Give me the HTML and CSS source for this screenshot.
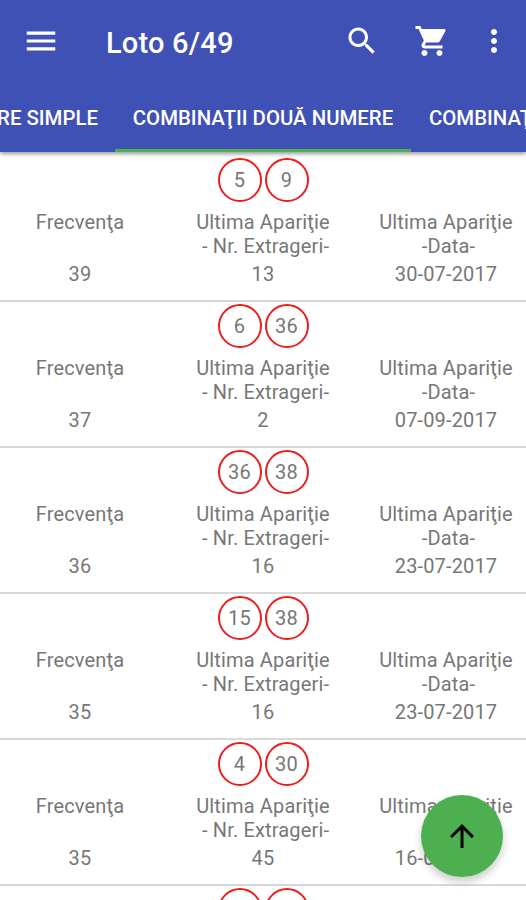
FILE: index.html
```
<!DOCTYPE html>
<html lang="ro">
<head>
  <meta charset="UTF-8">
  <meta name="viewport" content="width=device-width, initial-scale=1.0">
  <title>Loto 6/49</title>
  <link rel="stylesheet" href="styles.css">
</head>
<body>
  <!-- App bar -->
  <header class="app-bar">
    <div class="toolbar">
      <svg class="icon menu" viewBox="0 0 24 24"><path d="M3 18h18v-2H3v2zm0-5h18v-2H3v2zm0-7v2h18V6H3z"/></svg>
      <h1>Loto 6/49</h1>
      <svg class="icon search" viewBox="0 0 24 24"><path d="M15.5 14h-.79l-.28-.27C15.41 12.59 16 11.11 16 9.5 16 5.91 13.09 3 9.5 3S3 5.91 3 9.5 5.91 16 9.5 16c1.61 0 3.09-.59 4.23-1.57l.27.28v.79l5 4.99L20.49 19l-4.99-5zm-6 0C7.01 14 5 11.99 5 9.5S7.01 5 9.5 5 14 7.01 14 9.5 11.99 14 9.5 14z"/></svg>
      <svg class="icon cart" viewBox="0 0 24 24"><path d="M7 18c-1.1 0-1.99.9-1.99 2S5.9 22 7 22s2-.9 2-2-.9-2-2-2zM1 2v2h2l3.6 7.59-1.35 2.45c-.16.28-.25.61-.25.96 0 1.1.9 2 2 2h12v-2H7.42c-.14 0-.25-.11-.25-.25l.03-.12.9-1.63h7.45c.75 0 1.41-.41 1.75-1.03l3.58-6.49c.08-.14.12-.31.12-.48 0-.55-.45-1-1-1H5.21l-.94-2H1zm16 16c-1.1 0-1.99.9-1.99 2s.89 2 1.99 2 2-.9 2-2-.9-2-2-2z"/><path d="M5.2 4h15.8l-4.6 8H8.6z"/></svg>
      <svg class="icon more" viewBox="0 0 24 24"><path d="M12 8c1.1 0 2-.9 2-2s-.9-2-2-2-2 .9-2 2 .9 2 2 2zm0 2c-1.1 0-2 .9-2 2s.9 2 2 2 2-.9 2-2-.9-2-2-2zm0 6c-1.1 0-2 .9-2 2s.9 2 2 2 2-.9 2-2-.9-2-2-2z"/></svg>
    </div>
    <nav class="tabs">
      <div class="tab tab-prev">RE SIMPLE</div>
      <div class="tab active">COMBINAŢII DOUĂ NUMERE</div>
      <div class="tab tab-next">COMBINAŢ</div>
    </nav>
  </header>

  <!-- Lista de combinatii -->
  <main class="list">
    <section class="row">
      <div class="balls"><span>5</span><span>9</span></div>
      <div class="col"><p>Frecvenţa</p><b>39</b></div>
      <div class="col"><p>Ultima Apariţie<br>&nbsp;- Nr. Extrageri-</p><b>13</b></div>
      <div class="col"><p>Ultima Apariţie<br>&nbsp;-Data-</p><b>30-07-2017</b></div>
    </section>
    <section class="row">
      <div class="balls"><span>6</span><span>36</span></div>
      <div class="col"><p>Frecvenţa</p><b>37</b></div>
      <div class="col"><p>Ultima Apariţie<br>&nbsp;- Nr. Extrageri-</p><b>2</b></div>
      <div class="col"><p>Ultima Apariţie<br>&nbsp;-Data-</p><b>07-09-2017</b></div>
    </section>
    <section class="row">
      <div class="balls"><span>36</span><span>38</span></div>
      <div class="col"><p>Frecvenţa</p><b>36</b></div>
      <div class="col"><p>Ultima Apariţie<br>&nbsp;- Nr. Extrageri-</p><b>16</b></div>
      <div class="col"><p>Ultima Apariţie<br>&nbsp;-Data-</p><b>23-07-2017</b></div>
    </section>
    <section class="row">
      <div class="balls"><span>15</span><span>38</span></div>
      <div class="col"><p>Frecvenţa</p><b>35</b></div>
      <div class="col"><p>Ultima Apariţie<br>&nbsp;- Nr. Extrageri-</p><b>16</b></div>
      <div class="col"><p>Ultima Apariţie<br>&nbsp;-Data-</p><b>23-07-2017</b></div>
    </section>
    <section class="row">
      <div class="balls"><span>4</span><span>30</span></div>
      <div class="col"><p>Frecvenţa</p><b>35</b></div>
      <div class="col"><p>Ultima Apariţie<br>&nbsp;- Nr. Extrageri-</p><b>45</b></div>
      <div class="col"><p>Ultima Apariţie<br>&nbsp;-Data-</p><b>16-04-2017</b></div>
    </section>
    <section class="row">
      <div class="balls"><span></span><span></span></div>
    </section>
  </main>

  <!-- Buton inapoi sus -->
  <div class="fab">
    <svg viewBox="0 0 24 24"><path d="M4 12l1.41 1.41L11 7.83V20h2V7.83l5.58 5.59L20 12l-8-8-8 8z"/></svg>
  </div>
</body>
</html>
```

FILE: styles.css
```
* {
  margin: 0;
  padding: 0;
  box-sizing: border-box;
}

body {
  height: 900px;
  display: flex;
  flex-direction: column;
  overflow: hidden;
  font-family: Roboto, "Noto Sans", sans-serif;
  color: #777;
  background: #fff;
}

/* App bar */
.app-bar {
  height: 152px;
  flex-shrink: 0;
  background: #3f51b5;
  color: #fff;
  box-shadow: 0 2px 4px rgba(0, 0, 0, 0.4);
  z-index: 1;
}

.toolbar {
  height: 82px;
  display: flex;
  align-items: center;
  padding: 0 14px 0 22px;
}

.icon {
  width: 36px;
  height: 36px;
  fill: #fff;
  flex-shrink: 0;
}

.menu {
  width: 38px;
  height: 38px;
}

.toolbar h1 {
  flex: 1;
  margin-left: 46px;
  padding-top: 3px;
  font-size: 29px;
  font-weight: 500;
  letter-spacing: 0.2px;
}

.cart {
  margin-left: 34px;
}

.more {
  margin-left: 26px;
}

.tabs {
  height: 70px;
  display: flex;
  overflow: hidden;
}

.tab {
  flex-shrink: 0;
  display: flex;
  align-items: center;
  justify-content: center;
  padding-top: 1px;
  font-size: 20.4px;
  font-weight: 500;
  white-space: nowrap;
}

.tab-prev {
  width: 115px;
  justify-content: flex-end;
  padding-right: 17px;
}

.active {
  width: 296px;
  box-shadow: inset 0 -3px #4caf50;
}

.tab-next {
  padding-left: 18px;
}

/* Lista */
.list {
  flex: 1;
  min-height: 0;
  overflow: hidden;
}

.row {
  height: 146px;
  display: grid;
  grid-template-columns: 160px 206px 160px;
  grid-template-rows: 52px 1fr;
  padding-top: 2px;
  border-bottom: 2px solid #dadada;
  font-size: 20px;
  letter-spacing: 0.15px;
  text-align: center;
}

.row:first-child {
  height: 150px;
  padding-top: 6px;
}

.balls {
  grid-column: 1 / -1;
  display: flex;
  justify-content: center;
  gap: 3px;
}

.balls span {
  width: 44px;
  height: 44px;
  border: 2px solid #ee1c1c;
  border-radius: 50%;
  line-height: 41px;
}

.col p {
  height: 52px;
  line-height: 24px;
  white-space: nowrap;
}

.col b {
  display: block;
  font-weight: 400;
  line-height: 24px;
}

/* Buton plutitor */
.fab {
  position: fixed;
  right: 23px;
  bottom: 23px;
  width: 82px;
  height: 82px;
  display: flex;
  align-items: center;
  justify-content: center;
  border-radius: 50%;
  background: #4caf50;
  box-shadow: 0 5px 8px rgba(0, 0, 0, 0.2);
}

.fab svg {
  width: 36px;
  height: 36px;
}
```
